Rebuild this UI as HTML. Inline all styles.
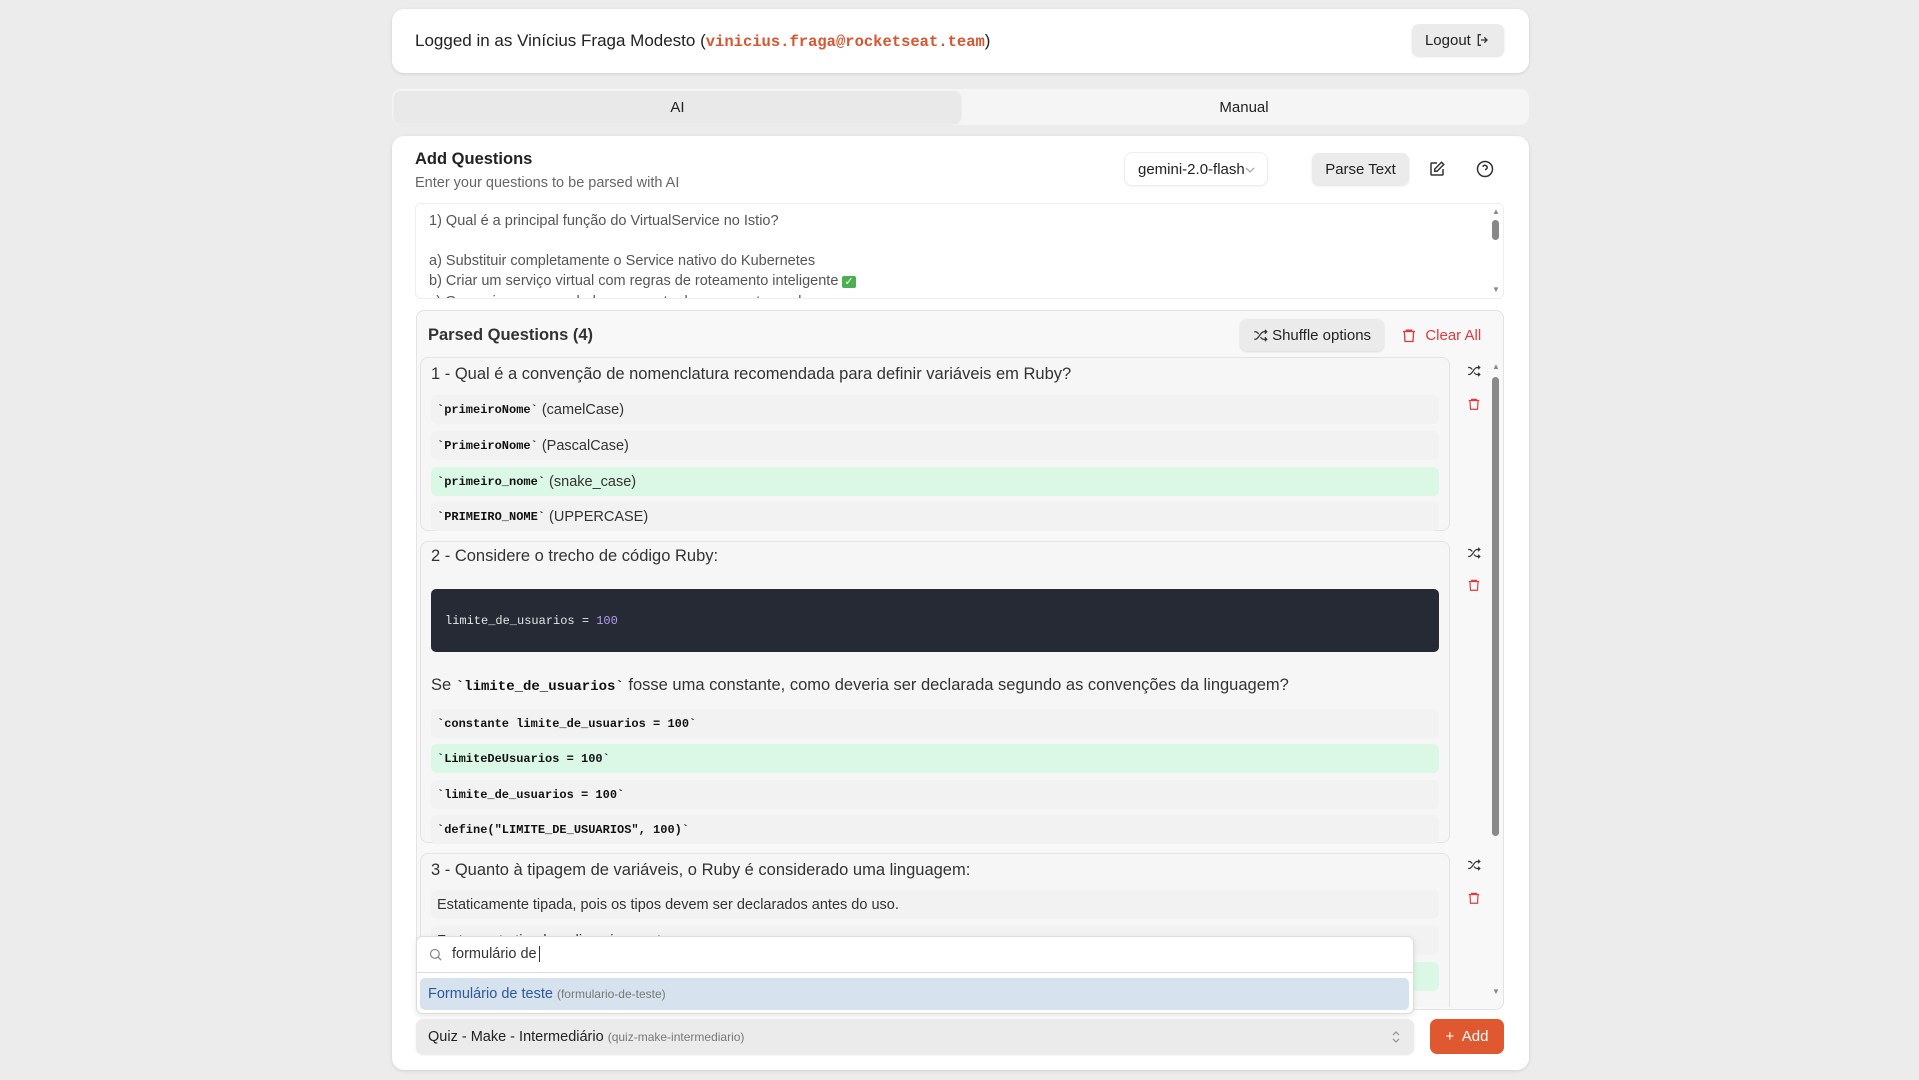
<!DOCTYPE html>
<html><head><meta charset="utf-8"><style>
*{box-sizing:border-box;margin:0;padding:0}
html{width:1919px;height:1080px;overflow:hidden}
body{width:1919px;height:1080px;background:#ececec;font-family:"Liberation Sans",sans-serif;color:#222;position:relative;overflow:hidden}
.a{position:absolute}
.mono{font-family:"Liberation Mono",monospace}
.card{background:#fff;border-radius:12px;box-shadow:0 1px 3px rgba(0,0,0,.12)}
.btn{background:#ebebeb;border-radius:7px;box-shadow:0 1px 2px rgba(0,0,0,.12);display:flex;align-items:center;justify-content:center;font-size:15px;color:#222}
.q{background:#f6f6f6;border:1px solid #e3e3e3;border-radius:8px}
.opt{position:absolute;left:10px;right:10px;height:29px;border-radius:6px;background:#f2f2f2;font-size:14.5px;color:#333;display:flex;align-items:center;padding-left:6px}
.opt.ok{background:#dbf8e6}
.opt b{font-family:"Liberation Mono",monospace;font-size:12px;font-weight:bold;color:#111}
.qt{position:absolute;left:10px;font-size:16.5px;color:#333}
svg{display:block}
</style></head><body>

<div class="a card" style="left:392px;top:9px;width:1137px;height:64px"></div>
<div class="a" style="left:415px;top:31px;font-size:17px;color:#222">Logged in as Vinícius Fraga Modesto (<span class="mono" style="color:#d9552f;font-weight:bold;font-size:15.5px">vinicius.fraga@rocketseat.team</span>)</div>
<div class="a btn" style="left:1412px;top:24px;width:92px;height:32px">Logout&nbsp;<svg width="16" height="16" viewBox="0 0 24 24" fill="none" stroke="#333" stroke-width="2"><path d="M9 4H5v16h4M14 8l4 4-4 4M18 12H9"/></svg></div>

<div class="a" style="left:392px;top:89px;width:1137px;height:36px;background:#f5f5f5;border-radius:9px"></div>
<div class="a" style="left:394px;top:91px;width:567px;height:32px;background:#e9e9e9;border-radius:7px;box-shadow:0 1px 2px rgba(0,0,0,.08);text-align:center;line-height:34px;font-size:15px">AI</div>
<div class="a" style="left:961px;top:91px;width:566px;height:32px;text-align:center;line-height:34px;font-size:15px">Manual</div>

<div class="a card" style="left:392px;top:136px;width:1137px;height:934px"></div>
<div class="a" style="left:415px;top:150px;font-size:16.5px;font-weight:bold;color:#222">Add Questions</div>
<div class="a" style="left:415px;top:175px;font-size:14.5px;color:#666">Enter your questions to be parsed with AI</div>
<div class="a" style="left:1124px;top:152px;width:144px;height:34px;border:1px solid #eee;border-radius:8px;box-shadow:0 1px 2px rgba(0,0,0,.06);font-size:15px;line-height:34px;padding-left:13px">gemini-2.0-flash<svg style="position:absolute;right:12px;top:13px" width="10" height="8" viewBox="0 0 10 8" fill="none" stroke="#aaa" stroke-width="1.3"><path d="M1 2l4 4 4-4"/></svg></div>
<div class="a btn" style="left:1312px;top:153px;width:97px;height:32px">Parse Text</div>
<svg class="a" style="left:1428px;top:160px" width="18" height="18" viewBox="0 0 24 24" fill="none" stroke="#333" stroke-width="2"><path d="M12 4H5a1 1 0 0 0-1 1v14a1 1 0 0 0 1 1h14a1 1 0 0 0 1-1v-7"/><path d="M18 3l3 3-9 9H9v-3z"/></svg>
<svg class="a" style="left:1476px;top:160px" width="18" height="18" viewBox="0 0 24 24" fill="none" stroke="#333" stroke-width="2"><circle cx="12" cy="12" r="10"/><path d="M9.1 9a3 3 0 0 1 5.8 1c0 2-3 3-3 3M12 17h.01"/></svg>

<div class="a" style="left:415px;top:203px;width:1089px;height:96px;border:1px solid #eee;border-radius:6px;overflow:hidden;font-size:14.5px;color:#555;line-height:20px;padding:7px 0 0 13px">
1) Qual é a principal função do VirtualService no Istio?<br><br>a) Substituir completamente o Service nativo do Kubernetes<br>b) Criar um serviço virtual com regras de roteamento inteligente <span style="background:#4caf50;color:#fff;font-size:11px;padding:0 2px;border-radius:2px">✓</span><br>c) Gerenciar apenas o balanceamento de carga entre pods</div>
<div class="a" style="left:1492px;top:207px;color:#888;font-size:8px">▲</div>
<div class="a" style="left:1492px;top:220px;width:7px;height:20px;background:#888;border-radius:4px"></div>
<div class="a" style="left:1492px;top:285px;color:#888;font-size:8px">▼</div>

<div class="a" style="left:416px;top:310px;width:1088px;height:700px;background:#f8f8f8;border:1px solid #e3e3e3;border-radius:8px"></div>
<div class="a" style="left:428px;top:326px;font-size:16.5px;font-weight:bold;color:#333">Parsed Questions (4)</div>
<div class="a btn" style="left:1240px;top:319px;width:144px;height:32px"><svg width="15" height="15" viewBox="0 0 24 24" fill="none" stroke="#333" stroke-width="2"><path d="M2 18h2c5 0 8-12 13-12h5M19 3l3 3-3 3M2 6h2c2 0 3.5 1.5 5 3.5M22 18h-5c-2 0-3.5-1.5-5-3.5M19 15l3 3-3 3"/></svg>&nbsp;Shuffle options</div>
<div class="a" style="left:1401px;top:327px;font-size:15px;color:#e0393e;display:flex;align-items:center"><svg width="16" height="17" viewBox="0 0 24 24" fill="none" stroke="#e0393e" stroke-width="2"><path d="M3 6h18M8 6V4h8v2M5 6l1 15h12l1-15"/></svg>&nbsp;&nbsp;Clear All</div>

<div class="a" style="left:416px;top:357px;width:1080px;height:650px;overflow:hidden">
 <div class="a q" style="left:4px;top:0;width:1030px;height:174px">
  <div class="qt" style="top:7px">1 - Qual é a convenção de nomenclatura recomendada para definir variáveis em Ruby?</div>
  <div class="opt" style="top:37px"><b>`primeiroNome`</b>&nbsp;(camelCase)</div>
  <div class="opt" style="top:73px"><b>`PrimeiroNome`</b>&nbsp;(PascalCase)</div>
  <div class="opt ok" style="top:109px"><b>`primeiro_nome`</b>&nbsp;(snake_case)</div>
  <div class="opt" style="top:144px"><b>`PRIMEIRO_NOME`</b>&nbsp;(UPPERCASE)</div>
 </div>
 <div class="a q" style="left:4px;top:184px;width:1030px;height:302px">
  <div class="qt" style="top:5px">2 - Considere o trecho de código Ruby:</div>
  <div class="a" style="left:10px;top:47px;right:10px;height:63px;background:#262a35;border-radius:5px;color:#e6e6e6;font-size:12px;line-height:63px;padding-left:14px"><span class="mono">limite_de_usuarios = <span style="color:#b89af0">100</span></span></div>
  <div class="qt" style="top:134px">Se <b class="mono" style="font-size:14px;color:#111">`limite_de_usuarios`</b> fosse uma constante, como deveria ser declarada segundo as convenções da linguagem?</div>
  <div class="opt" style="top:167px"><b>`constante limite_de_usuarios = 100`</b></div>
  <div class="opt ok" style="top:202px"><b>`LimiteDeUsuarios = 100`</b></div>
  <div class="opt" style="top:238px"><b>`limite_de_usuarios = 100`</b></div>
  <div class="opt" style="top:273px"><b>`define("LIMITE_DE_USUARIOS", 100)`</b></div>
 </div>
 <div class="a q" style="left:4px;top:496px;width:1030px;height:300px">
  <div class="qt" style="top:7px">3 - Quanto à tipagem de variáveis, o Ruby é considerado uma linguagem:</div>
  <div class="opt" style="top:36px">Estaticamente tipada, pois os tipos devem ser declarados antes do uso.</div>
  <div class="opt" style="top:72px">Fortemente tipada e dinamicamente</div>
  <div class="opt ok" style="top:108px"></div>
 </div>
</div>
<svg class="a" style="left:1467px;top:364px" width="14" height="14" viewBox="0 0 24 24" fill="none" stroke="#333" stroke-width="2"><path d="M2 18h2c5 0 8-12 13-12h5M19 3l3 3-3 3M2 6h2c2 0 3.5 1.5 5 3.5M22 18h-5c-2 0-3.5-1.5-5-3.5M19 15l3 3-3 3"/></svg>
<svg class="a" style="left:1467px;top:397px" width="14" height="14" viewBox="0 0 24 24" fill="none" stroke="#e0393e" stroke-width="2"><path d="M3 6h18M8 6V4h8v2M5 6l1 15h12l1-15"/></svg>
<svg class="a" style="left:1467px;top:546px" width="14" height="14" viewBox="0 0 24 24" fill="none" stroke="#333" stroke-width="2"><path d="M2 18h2c5 0 8-12 13-12h5M19 3l3 3-3 3M2 6h2c2 0 3.5 1.5 5 3.5M22 18h-5c-2 0-3.5-1.5-5-3.5M19 15l3 3-3 3"/></svg>
<svg class="a" style="left:1467px;top:578px" width="14" height="14" viewBox="0 0 24 24" fill="none" stroke="#e0393e" stroke-width="2"><path d="M3 6h18M8 6V4h8v2M5 6l1 15h12l1-15"/></svg>
<svg class="a" style="left:1467px;top:858px" width="14" height="14" viewBox="0 0 24 24" fill="none" stroke="#333" stroke-width="2"><path d="M2 18h2c5 0 8-12 13-12h5M19 3l3 3-3 3M2 6h2c2 0 3.5 1.5 5 3.5M22 18h-5c-2 0-3.5-1.5-5-3.5M19 15l3 3-3 3"/></svg>
<svg class="a" style="left:1467px;top:891px" width="14" height="14" viewBox="0 0 24 24" fill="none" stroke="#e0393e" stroke-width="2"><path d="M3 6h18M8 6V4h8v2M5 6l1 15h12l1-15"/></svg>
<div class="a" style="left:1492px;top:362px;color:#888;font-size:8px">▲</div>
<div class="a" style="left:1492px;top:377px;width:7px;height:459px;background:#8a8a8a;border-radius:4px"></div>
<div class="a" style="left:1492px;top:987px;color:#888;font-size:8px">▼</div>

<div class="a" style="left:416px;top:936px;width:998px;height:78px;background:#fff;border:1px solid #ddd;border-radius:6px;box-shadow:0 2px 6px rgba(0,0,0,.1)"></div>
<div class="a" style="left:416px;top:972px;width:998px;height:1px;background:#ddd"></div>
<svg class="a" style="left:428px;top:947px" width="15" height="15" viewBox="0 0 24 24" fill="none" stroke="#888" stroke-width="2"><circle cx="11" cy="11" r="7"/><path d="M21 21l-5-5"/></svg>
<div class="a" style="left:452px;top:946px;font-size:14.5px;color:#333">formulário de<span style="border-left:1px solid #333;margin-left:2px"></span></div>
<div class="a" style="left:420px;top:978px;width:989px;height:32px;background:#d6e2ee;border-radius:5px;font-size:14.5px;color:#2d5a9a;line-height:33px;padding-left:8px">Formulário de teste <span style="font-size:12px;color:#777">(formulario-de-teste)</span></div>

<div class="a" style="left:416px;top:1019px;width:998px;height:35px;background:#ebebeb;border-radius:7px;box-shadow:0 1px 2px rgba(0,0,0,.1);font-size:14.5px;line-height:36px;padding-left:12px;color:#222">Quiz - Make - Intermediário <span style="font-size:12px;color:#777">(quiz-make-intermediario)</span><svg style="position:absolute;right:14px;top:11px" width="8" height="14" viewBox="0 0 8 14" fill="none" stroke="#999" stroke-width="1.3"><path d="M1 5l3-3 3 3M1 9l3 3 3-3"/></svg></div>
<div class="a" style="left:1430px;top:1019px;width:74px;height:35px;background:#e0582f;border-radius:7px;color:#fff;font-size:15px;line-height:36px;text-align:center">+&nbsp; Add</div>
</body></html>
